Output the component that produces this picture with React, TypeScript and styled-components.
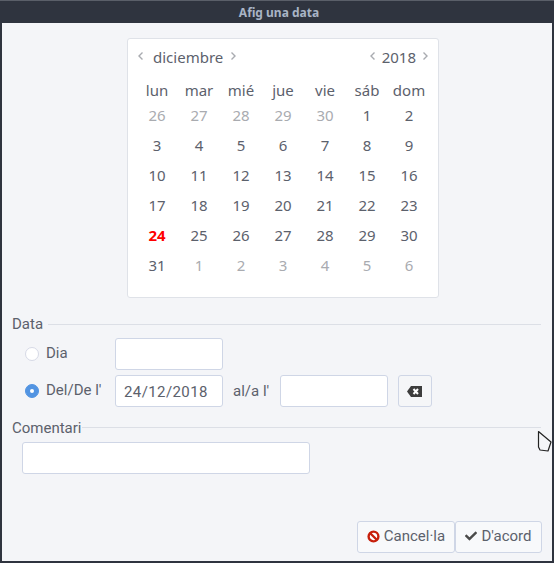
import React from 'react';
import styled, { createGlobalStyle } from 'styled-components';
import { FaCheck } from 'react-icons/fa';

const GlobalStyle = createGlobalStyle`
  html, body {
    margin: 0;
    padding: 0;
    background: #2f343f;
  }
`;

// Outer window with its dark frame
const Frame = styled.div`
  position: relative;
  width: 554px;
  height: 563px;
  box-sizing: border-box;
  display: flex;
  flex-direction: column;
  background: #2f343f;
  border-top: 1px solid #5a5f69;
  overflow: hidden;
`;

const TitleBar = styled.div`
  height: 22px;
  flex: none;
  padding-left: 4px;
  display: flex;
  align-items: center;
  justify-content: center;
  font: bold 12px "Noto Sans", sans-serif;
  color: #a9b4c6;
`;

const Content = styled.div`
  flex: 1;
  margin: 0 2px 2px 2px;
  padding: 15px 0 0 0;
  background: #f4f5f8;
  display: flex;
  flex-direction: column;
  font-family: Roboto, sans-serif;
  color: #5c616c;
`;

const Calendar = styled.div`
  align-self: flex-start;
  box-sizing: border-box;
  width: 312px;
  height: 260px;
  margin-left: 125px;
  padding: 0 9px 0 8px;
  background: #fff;
  border: 1px solid #dfe2e8;
  border-radius: 3px;
  font-family: "Noto Sans", sans-serif;
  font-size: 15px;
`;

const CalendarHead = styled.div`
  height: 36px;
  padding-left: 1px;
  display: flex;
  align-items: center;
  justify-content: space-between;
`;

const Switcher = styled.div<{ $gap: number }>`
  display: flex;
  align-items: center;
  gap: ${p => p.$gap}px;
`;

const MonthName = styled.span`
  margin-left: 2px;
`;

const Chevron = styled.svg`
  width: 8px;
  height: 10px;
  margin-top: -3px;
  fill: none;
  stroke: #a9abb0;
  stroke-width: 1.4;
`;

const Days = styled.div`
  display: grid;
  grid-template-columns: repeat(7, 42px);
  grid-auto-rows: 30px;
`;

const WeekDay = styled.div`
  height: 26px;
  margin-top: 2px;
  text-align: center;
  line-height: 26px;
`;

const Day = styled.div<{ $muted?: boolean; $today?: boolean }>`
  text-align: center;
  line-height: 30px;
  margin-top: -5px;
  color: ${p => (p.$today ? '#f00' : p.$muted ? '#a9abb0' : '#5c616c')};
  font-weight: ${p => (p.$today ? 700 : 400)};
`;

// Comentari sits 1px lower against its rule than Data does
const GroupTitle = styled.div<{ $tight?: boolean }>`
  display: flex;
  align-items: center;
  gap: ${p => (p.$tight ? '0' : '5px')};
  height: 16px;
  padding: 0 11px 0 10px;
  font-size: 15px;
  &::after {
    content: '';
    flex: 1;
    height: 1px;
    margin-top: ${p => (p.$tight ? '-2px' : '0')};
    background: #dcdfe6;
  }
`;

const DataGroup = styled.div`
  margin-top: 18px;
`;

const Rows = styled.div`
  display: flex;
  flex-direction: column;
  gap: 5px;
  margin-top: 6px;
  padding-left: 23px;
`;

const Row = styled.div`
  display: flex;
  align-items: center;
  height: 32px;
`;

const Radio = styled.span<{ $on?: boolean }>`
  width: 14px;
  height: 14px;
  flex: none;
  box-sizing: border-box;
  border-radius: 50%;
  background: ${p => (p.$on ? '#5294e2' : '#fff')};
  border: 1px solid ${p => (p.$on ? '#5294e2' : '#d6d9e6')};
  display: flex;
  align-items: center;
  justify-content: center;
  &::after {
    content: '';
    display: ${p => (p.$on ? 'block' : 'none')};
    width: 4px;
    height: 4px;
    border-radius: 50%;
    background: #fff;
  }
`;

const RadioLabel = styled.span`
  width: 69px;
  margin-left: 7px;
  margin-top: -3px;
  font-size: 15px;
`;

const Field = styled.div<{ $w: number }>`
  box-sizing: border-box;
  width: ${p => p.$w}px;
  height: 32px;
  padding: 0 8px;
  background: #fff;
  border: 1px solid #cfd6e6;
  border-radius: 3px;
  font: 15px/32px Roboto, sans-serif;
  letter-spacing: 0.4px;
`;

const Between = styled.span`
  margin: 0 11px 0 10px;
  font-size: 15px;
`;

const IconButton = styled.button`
  box-sizing: border-box;
  width: 34px;
  height: 32px;
  margin-left: 10px;
  padding: 0 2px 0 0;
  display: flex;
  align-items: center;
  justify-content: center;
  background: #f5f6f8;
  border: 1px solid #cfd6e6;
  border-radius: 3px;
`;

const CommentGroup = styled.div`
  margin-top: 13px;
`;

const CommentField = styled(Field)`
  margin: 6px 0 0 20px;
`;

const Footer = styled.div`
  margin-top: auto;
  padding: 0 10px 8px 0;
  display: flex;
  justify-content: flex-end;
`;

const ActionButton = styled.button<{ $w: number }>`
  box-sizing: border-box;
  width: ${p => p.$w}px;
  height: 32px;
  padding: 0 0 2px;
  display: flex;
  align-items: center;
  justify-content: center;
  gap: 4px;
  background: #f8f9fb;
  border: 1px solid #cfd6e6;
  border-radius: 3px;
  font: 15px Roboto, sans-serif;
  color: #5c616c;
`;

// Mouse pointer caught in the screenshot
const Pointer = styled.svg`
  position: absolute;
  left: 537px;
  top: 429px;
  width: 16px;
  height: 24px;
`;

const weekDays = ['lun', 'mar', 'mié', 'jue', 'vie', 'sáb', 'dom'];

const before = [26, 27, 28, 29, 30];
const current = Array.from({ length: 31 }, (_, i) => i + 1);
const after = [1, 2, 3, 4, 5, 6];

const Left = () => (
  <Chevron viewBox="0 0 8 10">
    <path d="M5.5 1.5 2 5l3.5 3.5" />
  </Chevron>
);

const Right = () => (
  <Chevron viewBox="0 0 8 10">
    <path d="M2.5 1.5 6 5 2.5 8.5" />
  </Chevron>
);

const BackspaceIcon = () => (
  <svg width="15" height="11" viewBox="0 0 15 11">
    <path d="M0 5.5 4 0h11v11H4z" fill="#3d3d3d" />
    <path d="m6.5 3 4.5 5M11 3 6.5 8" stroke="#fff" strokeWidth="2" />
  </svg>
);

const BanIcon = () => (
  <svg width="13" height="13" viewBox="0 0 13 13">
    <circle cx="6.5" cy="6.5" r="4.9" fill="#fff" stroke="#c7200c" strokeWidth="2.4" />
    <path d="m3 3 7 7" stroke="#c7200c" strokeWidth="2.4" />
  </svg>
);

const App = () => (
  <>
    <GlobalStyle />
    <Frame>
      <TitleBar>Afig una data</TitleBar>
      <Content>
        <Calendar>
          <CalendarHead>
            <Switcher $gap={6}>
              <Left />
              <MonthName>diciembre</MonthName>
              <Right />
            </Switcher>
            <Switcher $gap={5}>
              <Left />
              <span>2018</span>
              <Right />
            </Switcher>
          </CalendarHead>
          <Days>
            {weekDays.map(d => (
              <WeekDay key={d}>{d}</WeekDay>
            ))}
            {before.map(d => (
              <Day key={`b${d}`} $muted>{d}</Day>
            ))}
            {current.map(d => (
              <Day key={d} $today={d === 24}>{d}</Day>
            ))}
            {after.map(d => (
              <Day key={`a${d}`} $muted>{d}</Day>
            ))}
          </Days>
        </Calendar>

        <DataGroup>
          <GroupTitle>Data</GroupTitle>
          <Rows>
            <Row>
              <Radio />
              <RadioLabel>Dia</RadioLabel>
              <Field $w={108} />
            </Row>
            <Row>
              <Radio $on />
              <RadioLabel>Del/De l'</RadioLabel>
              <Field $w={108}>24/12/2018</Field>
              <Between>al/a l'</Between>
              <Field $w={108} />
              <IconButton>
                <BackspaceIcon />
              </IconButton>
            </Row>
          </Rows>
        </DataGroup>

        <CommentGroup>
          <GroupTitle $tight>Comentari</GroupTitle>
          <CommentField $w={288} />
        </CommentGroup>

        <Footer>
          <ActionButton $w={98}>
            <BanIcon />
            Cancel·la
          </ActionButton>
          <ActionButton $w={87}>
            <FaCheck size={12} color="#4a4a4a" />
            D'acord
          </ActionButton>
        </Footer>
      </Content>
      <Pointer viewBox="0 0 16 24">
        <path d="M1.5 1.5 14 12l-3 9-8-1-1.5-3z" fill="#f4f5f8" stroke="#222" strokeWidth="1.2" strokeLinejoin="round" />
      </Pointer>
    </Frame>
  </>
);

export default App;
